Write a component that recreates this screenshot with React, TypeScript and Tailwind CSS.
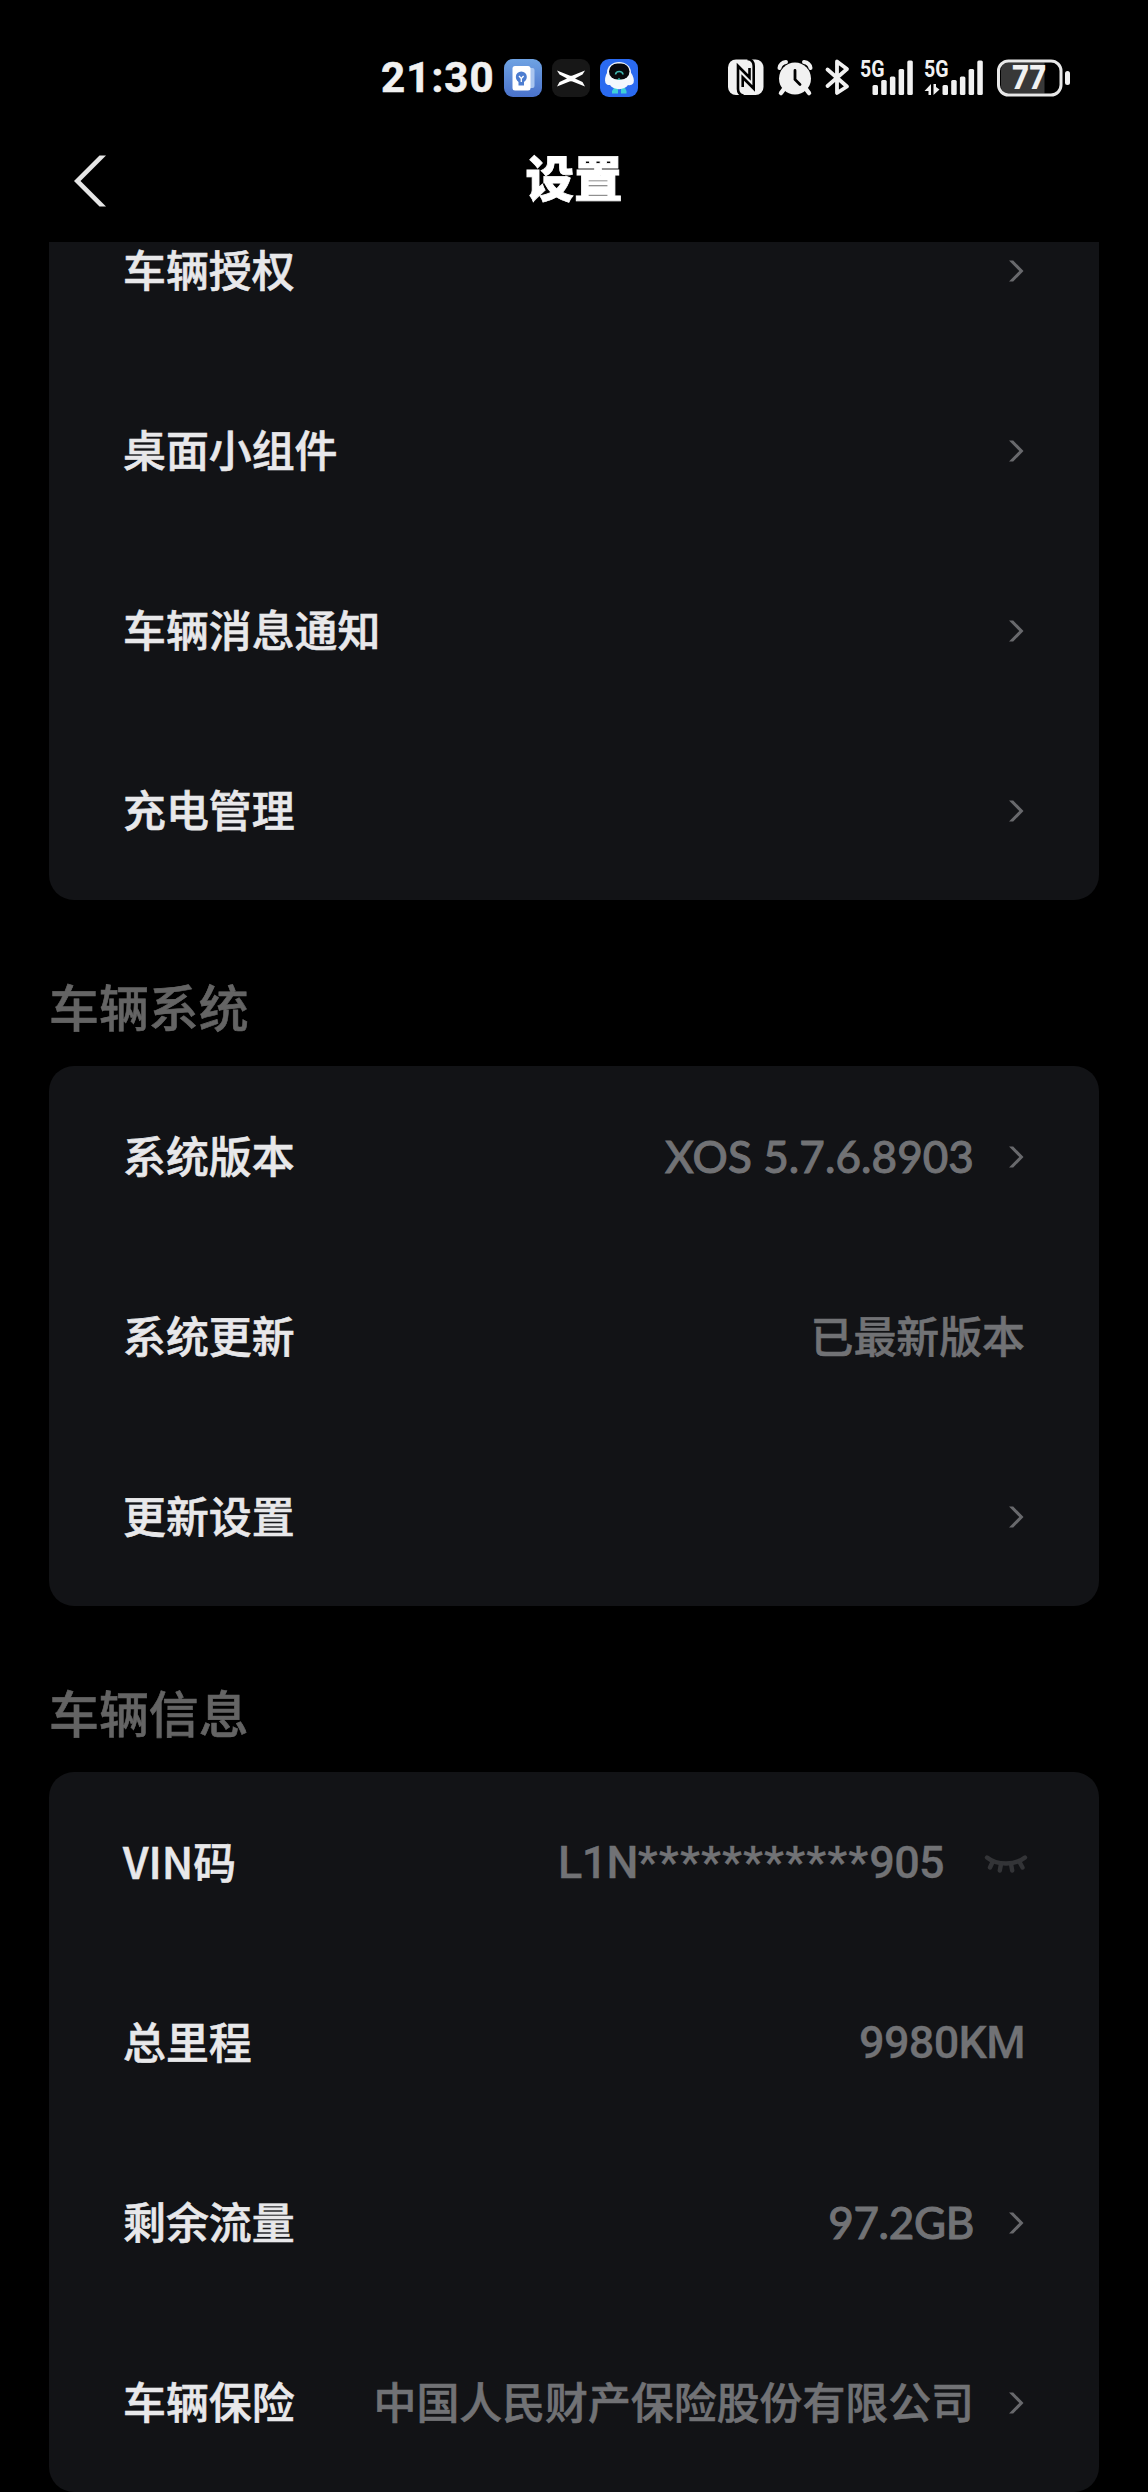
import type { ReactNode } from "react"
import { clsx } from "clsx"

type Row = {
  label: string
  value?: ReactNode
  valueClass?: string
  chevron?: boolean
  hidden?: boolean
}

const latin = "font-[Lato,'Noto_Sans_CJK_SC',sans-serif] text-[44px] [-webkit-text-stroke:0.9px]"
const din = "font-[Roboto,'Noto_Sans_CJK_SC',sans-serif] text-[45px] tracking-[-0.7px] [-webkit-text-stroke:0.3px]"

const shortcuts: Row[] = [
  { label: "车辆授权", chevron: true },
  { label: "桌面小组件", chevron: true },
  { label: "车辆消息通知", chevron: true },
  { label: "充电管理", chevron: true },
]

const system: Row[] = [
  { label: "系统版本", value: "XOS 5.7.6.8903", valueClass: clsx(latin, "tracking-[0.1px]"), chevron: true },
  { label: "系统更新", value: "已最新版本" },
  { label: "更新设置", chevron: true },
]

const vehicle: Row[] = [
  {
    label: "VIN码",
    value: (
      <>
        L1N<span className="tracking-[1.1px]">***********</span>905
      </>
    ),
    valueClass: din,
    hidden: true,
  },
  { label: "总里程", value: "9980KM", valueClass: din },
  { label: "剩余流量", value: "97.2GB", valueClass: clsx(latin, "tracking-[-0.3px]"), chevron: true },
  { label: "车辆保险", value: "中国人民财产保险股份有限公司", chevron: true },
]

function Chevron() {
  return (
    <svg width="16" height="22" viewBox="0 0 16 22" className="mt-px ml-[35px] shrink-0">
      <path d="M0 0.5h4.2L14.5 11 4.2 21.5H0L10.3 11z" fill="#68696c" />
    </svg>
  )
}

function ClosedEye() {
  return (
    <svg
      width="44"
      height="20"
      viewBox="0 0 44 20"
      fill="none"
      stroke="#333437"
      strokeWidth="4.4"
      strokeLinecap="round"
      className="ml-[40px] -mr-[3px] mt-[4px] shrink-0"
    >
      <path d="M3 3.5C13 11.5 31 11.5 41 3.5" />
      <path d="M8.5 8L6 13.500M17 10L15.800 16.500M27 10L28.200 16.500M35.500 8L38.500 13.500" />
    </svg>
  )
}

function Signal({ x, wide }: { x: number; wide?: boolean }) {
  const off = wide ? 6 : 0
  const bars = [10, 15, 18.5, 26, 34.5]
  return (
    <g transform={`translate(${x} 0)`}>
      <text
        x="0"
        y="20.5"
        textLength="24.5"
        lengthAdjust="spacingAndGlyphs"
        className="font-[Roboto,sans-serif] text-[23px] font-bold"
      >
        5G
      </text>
      {bars.map((h, i) => (
        <rect key={i} x={12.5 + off + i * 8.7} y={39 - h} width="5.5" height={h} rx="1.5" />
      ))}
      {wide && <path d="M7 28V39H4.500V35H0.500zM9.500 28V39L15.500 33.500L12 31V28z" />}
    </g>
  )
}

function StatusIcons() {
  return (
    <svg width="346" height="44" viewBox="0 0 346 44" fill="#f1f1f1" className="shrink-0">
      {/* nfc */}
      <rect x="4" y="3.5" width="35.5" height="35.5" rx="8" />
      <g fill="none" stroke="#000" strokeWidth="2.6">
        <path d="M19.500 39.500C16 39 14 37 14 33V10L25.500 21.500V12" />
        <path d="M23.500 3C27.500 3.500 29.700 6 29.700 10V32.500L18.700 21.500V31" />
      </g>
      {/* alarm */}
      <circle cx="71" cy="22.5" r="16" />
      <path
        d="M55.500 12C56 9 58.500 6.500 62 6M86.500 12C86 9 83.500 6.500 80 6"
        fill="none"
        stroke="#f1f1f1"
        strokeWidth="4"
        strokeLinecap="round"
      />
      <path d="M60 33L57 37M82 33L85 37" stroke="#f1f1f1" strokeWidth="4.500" strokeLinecap="round" />
      <path d="M71 14.500V23.500L76 28.500" fill="none" stroke="#000" strokeWidth="2.800" strokeLinecap="round" />
      {/* bluetooth */}
      <path
        d="M103.500 13.500L123 30.500L113 37V5.500L123 13L103.500 30"
        fill="none"
        stroke="#f1f1f1"
        strokeWidth="3.800"
        strokeLinecap="round"
        strokeLinejoin="round"
      />
      <Signal x={136} />
      <Signal x={200} wide />
      {/* battery */}
      <path d="M284 6.500H320.500V37.500H284C279 37.500 277 34 277 29V15C277 10 279 6.500 284 6.500z" fill="#383838" />
      <rect x="274.500" y="5" width="62.500" height="34" rx="10" fill="none" stroke="#e8e8e8" strokeWidth="3" />
      <rect x="341" y="15" width="5" height="14" rx="2.500" />
      <text
        x="288"
        y="33"
        textLength="34"
        lengthAdjust="spacingAndGlyphs"
        className="font-[Inter,sans-serif] text-[32px] font-extrabold"
      >
        77
      </text>
    </svg>
  )
}

function AppBadges() {
  return (
    <svg width="134" height="38" viewBox="0 0 134 38">
      <defs>
        <linearGradient id="tips" x1="0" y1="0" x2="0" y2="1">
          <stop offset="0" stopColor="#6fa3e3" />
          <stop offset="1" stopColor="#4a72cb" />
        </linearGradient>
      </defs>
      {/* tips */}
      <rect width="38" height="38" rx="9" fill="url(#tips)" />
      <rect x="24" y="9" width="6.500" height="20" rx="2" fill="#a9c5ef" />
      <rect x="8.500" y="7" width="18" height="24.500" rx="2.500" fill="#fff" />
      <circle cx="17.300" cy="18" r="5.500" fill="#4d7dd0" />
      <path d="M14.500 22h5.500v4.500h-5.500z" fill="#4d7dd0" />
      <path d="M15 17L17.300 19.500L19.600 17M17.300 19.500V23" fill="none" stroke="#fff" strokeWidth="1.300" />

      {/* xpeng */}
      <rect x="48" width="38" height="38" rx="9" fill="#171717" />
      <path
        d="M53 11.500L65.500 16.500Q67 17 68.500 16.500L81 11.500L78.500 15.500L71 19.500L78.500 23L81 27.500L68.500 22.500Q67 22 65.500 22.500L53 27.500L55.500 23L63 19.500L55.500 15.500z"
        fill="#fff"
      />

      {/* assistant */}
      <rect x="96" width="38" height="38" rx="9" fill="#2a6af0" />
      <path d="M110 29h4v5.500h-6v-2.500zM117 29h4l1.500 3v2.500h-5.500z" fill="#3fd0d8" />
      <ellipse cx="115" cy="13.500" rx="12" ry="10.500" fill="#f3f7fd" />
      <path d="M103.500 13C101 17 100.500 21 101.500 24C103 26.500 105.500 26 106 26C109 31.500 121 31.500 124 26C126 26.500 128 26 129.500 24C130.500 21 129.500 17 126.500 13z" fill="#f3f7fd" />
      <rect x="105" y="4.500" width="20.500" height="16" rx="8.500" fill="#07080d" />
      <path d="M111.500 15.500C112 11.500 118.500 11.500 119 15.500" fill="none" stroke="#3fb6b0" strokeWidth="1.600" />
      <path d="M115 18.800L117 21H113z" fill="#3fb6b0" />
    </svg>
  )
}

function StatusBar() {
  return (
    <div className="flex h-[130px] shrink-0 items-start pt-[56px] pl-[381px]">
      <span className="w-[123px] shrink-0 font-[Roboto,sans-serif] text-[42px] leading-[44px] font-bold tracking-[1.1px] text-[#f1f1f1] [-webkit-text-stroke:0.6px]">
        21:30
      </span>
      <div className="mt-[3px] mr-[86px] shrink-0">
        <AppBadges />
      </div>
      <StatusIcons />
    </div>
  )
}

function Card({ rows, className }: { rows: Row[]; className?: string }) {
  return (
    <ul className={clsx("rounded-[25px] bg-[#121316] px-[74px]", className)}>
      {rows.map((row) => (
        <li
          key={row.label}
          className="flex h-[180px] items-center text-[42.9px] leading-none font-medium whitespace-nowrap"
        >
          <span className="pb-[4px] text-[#e8e8ea] [-webkit-text-stroke:0.6px]">{row.label}</span>
          <span
            className={clsx("ml-auto text-[#717275]", row.valueClass ?? "pb-[4px] [-webkit-text-stroke:0.6px]")}
          >
            {row.value}
          </span>
          {row.chevron && <Chevron />}
          {row.hidden && <ClosedEye />}
        </li>
      ))}
    </ul>
  )
}

function SectionTitle({ children }: { children: ReactNode }) {
  return (
    <h2 className="flex h-[166px] items-end pb-[36px] text-[49.9px] leading-[50px] font-medium text-[#646464] [-webkit-text-stroke:0.6px]">
      {children}
    </h2>
  )
}

export default function App() {
  return (
    <div className="flex h-[2492px] w-[1148px] flex-col overflow-hidden bg-black font-['Noto_Sans_CJK_SC',sans-serif]">
      <StatusBar />
      <header className="flex h-[112px] shrink-0 items-start justify-between px-[74px] pt-[21px]">
        <svg width="32" height="52" viewBox="0 0 32 52" className="mt-[4px]">
          <path d="M25.500 0.500H32L6.500 26L32 51.500H25.500L0 26z" fill="#e6e6e6" />
        </svg>
        <h1 className="text-[48.5px] leading-[50px] font-black text-white [-webkit-text-stroke:0.8px]">设置</h1>
        <span className="w-8" />
      </header>
      <main className="min-h-0 flex-1 overflow-hidden px-[49px]">
        <Card rows={shortcuts} className="-mt-[62px]" />
        <SectionTitle>车辆系统</SectionTitle>
        <Card rows={system} />
        <SectionTitle>车辆信息</SectionTitle>
        <Card rows={vehicle} />
      </main>
    </div>
  )
}
